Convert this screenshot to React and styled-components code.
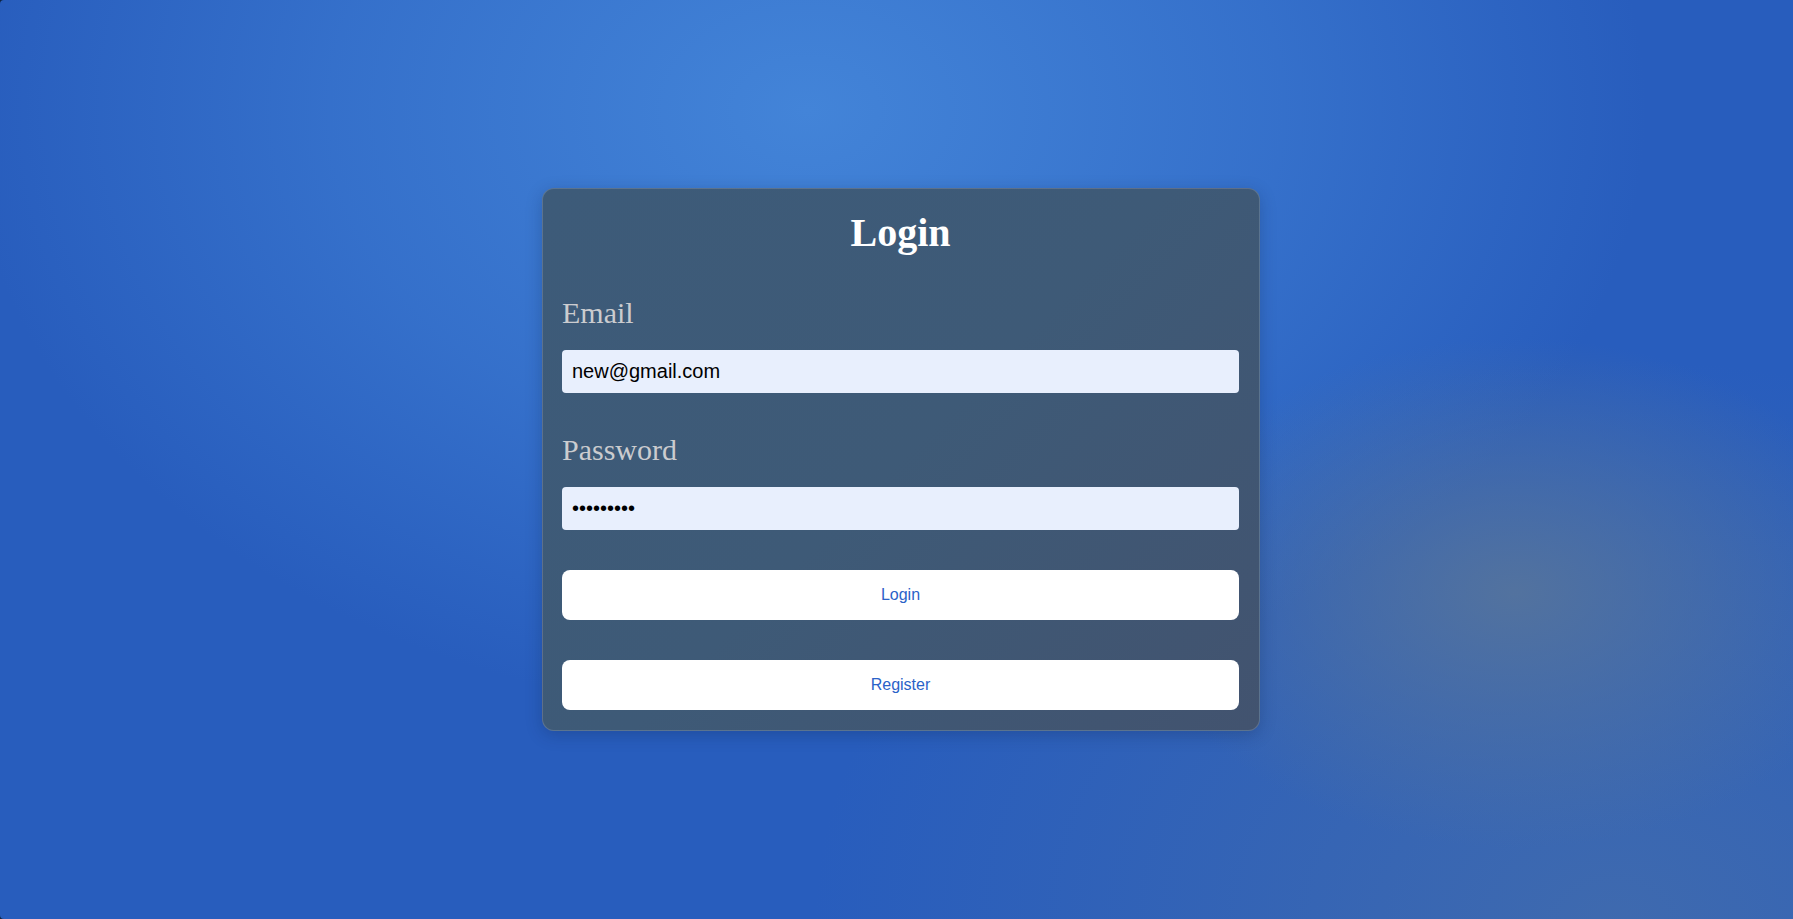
import React, { useState } from 'react';
import styled, { createGlobalStyle } from 'styled-components';

const GlobalStyle = createGlobalStyle`
  html, body {
    margin: 0;
    padding: 0;
    height: 100%;
    background: #0d2340;
  }
  body {
    font-family: "Liberation Serif", "Times New Roman", serif;
  }
  #root {
    height: 100%;
  }
`;

const Page = styled.div`
  box-sizing: border-box;
  min-height: 100vh;
  display: flex;
  justify-content: center;
  align-items: flex-start;
  padding: 188px 0 0 9px;
  border-radius: 4px 0 0 4px;
  background:
    radial-gradient(ellipse 500px 340px at 84.5% 64.5%, rgba(86, 116, 156, 0.9) 0%, rgba(86, 116, 156, 0) 75%),
    radial-gradient(ellipse 1050px 760px at 45% 12%, #4384d8 0%, rgba(64, 128, 214, 0.55) 45%, rgba(64, 128, 214, 0) 80%),
    radial-gradient(ellipse 1000px 700px at 90% 100%, rgba(70, 110, 170, 0.75) 0%, rgba(70, 110, 170, 0) 80%),
    #285dbd;
`;

const Card = styled.form`
  box-sizing: border-box;
  width: 718px;
  padding: 20px 20px 20px 19px;
  display: flex;
  flex-direction: column;
  border-radius: 12px;
  border: 1px solid rgba(160, 175, 200, 0.3);
  background: linear-gradient(135deg, #3d5b79 0%, #3e5a77 50%, #42536f 100%);
  box-shadow: 0 4px 16px rgba(10, 30, 70, 0.25);
`;

const Title = styled.h1`
  margin: 2px 0 1px;
  font-size: 40px;
  line-height: 44px;
  font-weight: bold;
  color: #ffffff;
  text-align: center;
`;

const Field = styled.div`
  display: flex;
  flex-direction: column;
  margin-top: 40px;
`;

const Label = styled.label`
  font-size: 30px;
  line-height: 34px;
  color: #cbcccf;
  margin-bottom: 20px;
`;

const Input = styled.input`
  box-sizing: border-box;
  height: 43px;
  width: 100%;
  border: none;
  border-radius: 4px;
  padding: 0 10px;
  background: #e8effd;
  color: #000;
  font-family: "Liberation Sans", Arial, sans-serif;
  font-size: 20px;
  outline: none;
`;

const Button = styled.button`
  box-sizing: border-box;
  height: 50px;
  width: 100%;
  margin-top: 40px;
  border: none;
  border-radius: 8px;
  background: #ffffff;
  color: #2a62c8;
  font-family: "Liberation Sans", Arial, sans-serif;
  font-size: 16px;
  cursor: pointer;
`;

export default function App() {
  const [email, setEmail] = useState('new@gmail.com');
  const [password, setPassword] = useState('123456789');

  return (
    <>
      <GlobalStyle />
      <Page>
        <Card onSubmit={(e) => e.preventDefault()}>
          <Title>Login</Title>
          <Field>
            <Label htmlFor="email">Email</Label>
            <Input id="email" type="email" value={email} onChange={(e) => setEmail(e.target.value)} />
          </Field>
          <Field>
            <Label htmlFor="password">Password</Label>
            <Input id="password" type="password" value={password} onChange={(e) => setPassword(e.target.value)} />
          </Field>
          <Button type="submit">Login</Button>
          <Button type="button">Register</Button>
        </Card>
      </Page>
    </>
  );
}
